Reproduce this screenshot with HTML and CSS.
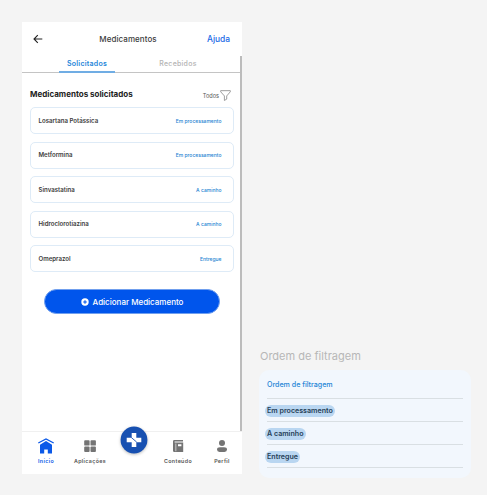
FILE: index.html
```html
<!DOCTYPE html>
<html lang="pt-BR">
<head>
<meta charset="utf-8">
<title>Medicamentos</title>
<link rel="stylesheet" href="styles.css">
</head>
<body>
<main class="board">
  <section class="phone">
    <header class="topbar">
      <svg class="back" viewBox="0 0 10 10"><path d="M9.3 5H1M4.8 1.1 1 5l3.8 3.9"/></svg>
      <h1>Medicamentos</h1>
      <a class="help">Ajuda</a>
    </header>
    <nav class="tabs">
      <span class="tab active"><span>Solicitados</span></span>
      <span class="tab"><span>Recebidos</span></span>
    </nav>
    <div class="content">
      <div class="heading">
        <h2>Medicamentos solicitados</h2>
        <span class="filter">Todos <svg viewBox="0 0 10 10"><path d="M.6.6h8.8v1L6.100 5.400v2.900L4 9.500V5.400L.6 1.600z"/></svg></span>
      </div>
      <ul class="cards">
        <li><b>Losartana Potássica</b><span class="status">Em processamento</span></li>
        <li><b>Metformina</b><span class="status">Em processamento</span></li>
        <li><b>Sinvastatina</b><span class="status">A caminho</span></li>
        <li><b>Hidroclorotiazina</b><span class="status">A caminho</span></li>
        <li><b>Omeprazol</b><span class="status">Entregue</span></li>
      </ul>
      <button class="add"><svg viewBox="0 0 8 8"><circle cx="4" cy="4" r="3.7" fill="#fff"/><path d="M4 2.200v3.600M2.200 4h3.600" stroke="#0055ec" stroke-width="1.100"/></svg><span>Adicionar Medicamento</span></button>
    </div>
    <div class="scrollbar"></div>
    <nav class="bottom">
      <a class="item home"><svg viewBox="0 0 16 16"><path d="M2 6.700 8 2.900l6 3.800V15.600H9.800v-4.200H6.200v4.200H2z"/><path class="roof" d="M.3 5 8 .9 15.700 5"/></svg><span>Início</span></a>
      <a class="item"><svg viewBox="0 0 16 16"><rect x="2.200" y="2.200" width="5.400" height="5.400" rx=".9"/><rect x="8.500" y="2.200" width="5.400" height="5.400" rx=".9"/><rect x="2.200" y="8.500" width="5.400" height="5.400" rx=".9"/><rect x="8.500" y="8.500" width="5.400" height="5.400" rx=".9"/></svg><span>Aplicações</span></a>
      <span class="item center"></span>
      <a class="item"><svg viewBox="0 0 16 16"><path fill-rule="evenodd" d="M4.300 2H13v1.600H4.600v1H13.200V14H4.300Q3 14 3 12.700V3.400Q3 2 4.300 2zM5.600 5.400v7.800h.6V5.400zM8 6.200v2h3.400v-2z"/></svg><span>Conteúdo</span></a>
      <a class="item"><svg viewBox="0 0 16 16"><circle cx="8" cy="5" r="3"/><path d="M3 11.600Q3 9.200 6 9.200h4q3 0 3 2.400 0 2.300-2.500 2.300h-5Q3 13.900 3 11.600z"/></svg><span>Perfil</span></a>
      <svg class="fab" viewBox="0 0 28 28"><circle cx="14" cy="14" r="13.400"/><path class="cross" d="M11.700 7h4.600v4.700h5v4.600h-5V21h-4.600v-4.700h-5v-4.600h5z"/><path class="vein" d="M11.300 11.500l5.400 4.600"/></svg>
    </nav>
  </section>
  <section class="aside">
    <h3>Ordem de filtragem</h3>
    <div class="panel">
      <div class="row title"><span>Ordem de filtragem</span></div>
      <div class="row"><mark>Em processamento</mark></div>
      <div class="row"><mark>A caminho</mark></div>
      <div class="row"><mark>Entregue</mark></div>
    </div>
  </section>
</main>
</body>
</html>
```
FILE: styles.css
```css
* { box-sizing: border-box; }
body { margin: 0; background: #f4f4f4; font-family: Inter, "Liberation Sans", sans-serif; color: #3c3c3c; }
h1, h2, h3, ul { margin: 0; padding: 0; }
.board { width: 487px; height: 495px; padding: 22px 0 0 22px; display: flex; gap: 18px; overflow: hidden; }
.phone { position: relative; width: 220px; height: 452px; background: #fff; display: flex; flex-direction: column; flex: none; }
.topbar { height: 33px; padding: 0 12px 0 11px; display: grid; grid-template-columns: 40px 1fr 40px; align-items: center; }
.back { width: 10px; height: 10px; fill: none; stroke: #222; stroke-width: 1.1; }
.topbar h1 { font-size: 8px; font-weight: 500; letter-spacing: .07px; text-align: center; white-space: nowrap; padding-right: 7px; }
.help { font-size: 8.4px; font-weight: 500; color: #1768e6; text-align: right; }
.tabs { height: 18px; display: flex; border-bottom: 1px solid #c4c4c4; padding: 0 36px 0 37px; justify-content: space-between; }
.tab { width: 56px; font-size: 7px; font-weight: 500; letter-spacing: .25px; color: #b4b4b4; text-align: center; line-height: 17px; height: 18px; }
.active { color: #2385d9; font-weight: 600; border-bottom: 2px solid #70ade4; }
.content { flex: 1; padding: 12px 8px 0; }
.heading { display: flex; align-items: center; justify-content: space-between; height: 18px; }
h2 { font-size: 8px; font-weight: 700; color: #222; }
.filter { display: flex; align-items: center; gap: 1px; font-size: 5.6px; color: #555; padding: 3px 3px 0 0; }
.filter svg { width: 11px; height: 11px; fill: none; stroke: #777; stroke-width: .65; }
.cards { list-style: none; display: grid; gap: 7.5px; padding-top: 4px; }
.cards li { height: 27px; border: 1px solid #deebf7; border-radius: 5px; padding: 0 11.5px 1px 7.5px; display: flex; align-items: center; justify-content: space-between; font-size: 6.1px; }
.cards b { font-weight: 600; }
.status { font-size: 5px; font-weight: 500; color: #2583d2; padding-top: 1px; }
.add { display: flex; align-items: center; justify-content: center; gap: 4px; width: 176px; height: 25px; border: 1px solid #709fee; border-radius: 13px; background: #0055ec; color: #fff; margin: 17px 0 0 14px; padding: 0; font: 500 8px Inter, sans-serif; letter-spacing: 0; }
.add svg { width: 8px; height: 8px; }
.scrollbar { position: absolute; right: 0; top: 34px; width: 2px; height: 375px; background: #bcbcbc; }
.bottom { position: relative; height: 43px; border-top: 1px solid #f0f0f0; display: grid; grid-template-columns: repeat(5, 44px); padding: 6px 0 0 2px; }
.item { display: flex; flex-direction: column; align-items: center; gap: 4px; color: #555; font-size: 5.3px; font-weight: 600; letter-spacing: .36px; line-height: 7px; }
.item svg { width: 16px; height: 16px; fill: #747474; }
.item.home { color: #0b59e8; }
.item.home svg { fill: #0b59e8; }
.item.home svg .roof { fill: none; stroke: #0b59e8; stroke-width: 1.3; }
.fab { position: absolute; left: 98px; top: -6px; width: 28px; height: 28px; fill: #1750b1; filter: drop-shadow(0 1px 1.5px #0004); }
.cross { fill: #fff; }
.vein { fill: none; stroke: #1750b1; stroke-width: .9; }
.aside { width: 211px; padding-top: 326px; margin-left: -1px; }
h3 { font-size: 11px; font-weight: 400; letter-spacing: 0; line-height: 16px; color: #b7b7b7; padding-left: 1px; }
.panel { margin-top: 6px; width: 212px; height: 108px; background: #f2f7fd; border-radius: 10px; padding: 6px 8px 0 6px; }
.row { height: 23px; margin-left: 2px; border-bottom: 1px solid #d9dfe3; display: flex; align-items: center; font-size: 7.1px; font-weight: 600; padding-top: 1px; }
.title { color: #2585d6; font-weight: 500; padding: 0 0 5px; }
mark { background: #b9d6f1; color: #263e57; border-radius: 6px; height: 12px; line-height: 12px; padding: 0 2.5px; margin-left: -2.5px; }
```
